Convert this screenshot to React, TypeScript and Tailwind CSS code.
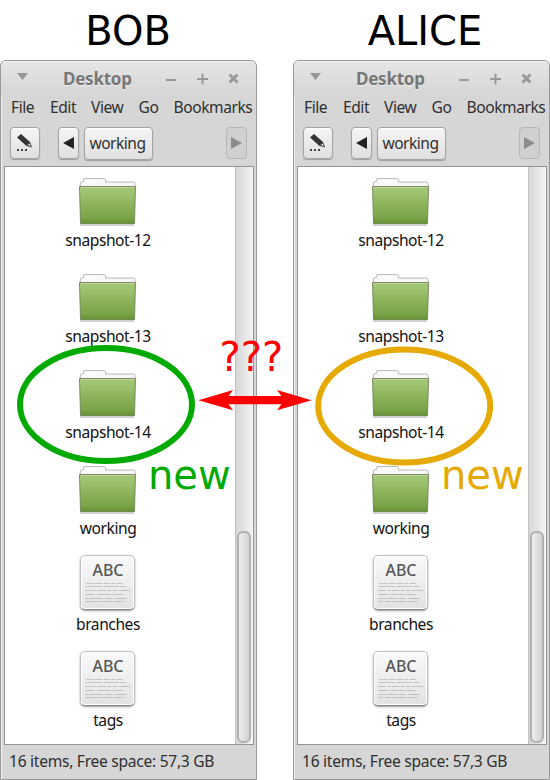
const uiFont = "font-['Noto_Sans','Open_Sans',sans-serif]";
const noteFont = "font-['DejaVu_Sans',sans-serif]";

function Folder() {
  return (
    <svg width="60" height="50" viewBox="0 0 60 50" className="block">
      <defs>
        <linearGradient id="folder" x1="0" y1="0" x2="0" y2="1">
          <stop offset="0" stopColor="#a8ca79" />
          <stop offset=".84" stopColor="#7ba347" />
          <stop offset="1" stopColor="#66902f" />
        </linearGradient>
      </defs>
      <path d="M3 48h54" stroke="#000" strokeOpacity=".18" strokeWidth="2" />
      <path d="M3.5 14V5.5l1-.5h1.500L7 1.500h20l1.500 1V5H57l1 1v9H3.500z" fill="#f8f8f8" stroke="#bcbcbc" />
      <path d="M7 4h18" stroke="#fff" />
      <path d="M2.500 9.500h56L57.500 46.500h-54z" fill="url(#folder)" stroke="#6b8052" strokeOpacity=".85" />
      <path d="M3.500 10.500h54" stroke="#bed69d" />
    </svg>
  );
}

function TextFile() {
  const lines = [
    "lorem ipsum dolo sit amet",
    "consectetur adipiscing elit.",
    "Donec at metus at est incidunt",
    "tempus. Phasellus blandit",
    "sollicitudin justo. Vivamus,",
    "sem eget consequat sodales",
  ];
  return (
    <div className="mx-auto h-[55px] w-[55px] rounded-[5px] border border-[#c0c0c0] border-b-[#858585] bg-linear-to-b from-[#fafafa] to-[#e2e2e2] tracking-normal shadow-[0_1px_2px_#0006,inset_0_0_0_1px_#fff]">
      <svg width="53" height="53" viewBox="0 0 53 53">
        <text x="11.5" y="19.5" fontFamily="Noto Sans" fontSize="16.5" fontWeight="500" fill="#555" textLength="31" lengthAdjust="spacingAndGlyphs">ABC</text>
        {lines.map((line, i) => (
          <text key={line} x="4.500" y={27.5 + i * 3.75} fontFamily="Liberation Mono" fontSize="2.5" fontWeight="bold" fill="#999">{line}</text>
        ))}
      </svg>
    </div>
  );
}

function Item({ name, file = false }: { name: string; file?: boolean }) {
  return (
    <div className="h-24 shrink-0 text-center">
      <div className="flex h-[50px] w-[204px] justify-center">
        {file ? <div className="-mt-[6px] w-[55px]"><TextFile /></div> : <Folder />}
      </div>
      <div className="mt-[3px] w-[206px] text-[15.6px] leading-5 tracking-[-0.45px] text-[#111]">{name}</div>
    </div>
  );
}

const button = "flex shrink-0 items-center justify-center rounded-[4px] border border-[#a4a4a4] bg-linear-to-b from-[#f6f6f6] to-[#dfdfdf] shadow-[0_1px_1px_#0004,inset_0_1px_0_#fff]";

function FileWindow() {
  return (
    <section className={`${uiFont} flex h-[720px] w-[257px] flex-col overflow-hidden rounded-t-[6px] border border-[#999] bg-[#d6d6d6] text-[15.6px] tracking-[-0.45px] text-[#303030] shadow-[inset_1px_1px_0_#eee]`}>
      <header className="flex h-[34px] shrink-0 items-center rounded-t-[5px] border-t border-[#f5f5f5] bg-linear-to-b from-[#e5e5e5] to-[#d6d6d6] pl-4">
        <svg width="12" height="9" className="mt-[-4px]"><path d="M0 1h11L5.500 8z" fill="#969696" /></svg>
        <h2 className="ml-[34px] w-[102px] text-[17px] leading-8 font-bold tracking-[-0.25px] text-[#777] [text-shadow:0_1px_0_#eee]">Desktop</h2>
        <svg width="76" height="14" viewBox="0 0 76 14" fill="none" stroke="#999" strokeWidth="2">
          <path d="M1 8h10M32 7h11M37.500 1.500v11" />
          <path d="M64.500 2.500l8 8M72.500 2.500l-8 8" strokeWidth="3" />
        </svg>
      </header>
      <nav className="grid h-6 shrink-0 grid-cols-[39px_41px_47.5px_35px_80px] items-center pl-[10px] leading-5 whitespace-nowrap">
        <span>File</span><span>Edit</span><span>View</span><span>Go</span><span>Bookmarks</span>
      </nav>
      <div className="flex h-[47px] shrink-0 items-center pt-[1px] pl-[9px]">
        <div className={`${button} h-8 w-[30px]`}>
          <svg width="18" height="20" viewBox="0 0 18 20">
            <path d="M1 4.500L5 1l9 8 1.500 5-5-1z" fill="#343434" />
            <path d="M11 12l3-2 1.500 4z" fill="#eee" stroke="#555" />
            <path d="M1 17h2m2 0h2m2 0h2" stroke="#444" strokeWidth="2" />
          </svg>
        </div>
        <div className={`${button} ml-[18px] h-8 w-[21px]`}>
          <svg width="12" height="14"><path d="M11 1v12L0 7z" fill="#222" /></svg>
        </div>
        <div className={`${button} ml-[5px] h-[33px] w-[69px] pt-px pr-[2px] tracking-[-0.5px]`}>working</div>
        <div className="ml-[73px] flex h-8 w-[21px] items-center justify-center rounded-[4px] border border-[#b7b7b7] bg-[#d0d0d0]">
          <svg width="12" height="14"><path d="M0 1v12L11 7z" fill="#8c8c8c" /></svg>
        </div>
      </div>
      <main className="ml-[3px] flex h-[579px] w-[250px] shrink-0 border border-[#949494] bg-white">
        <div className="flex h-[577px] w-[230px] flex-col pt-[10px]">
          <Item name="snapshot-12" /><Item name="snapshot-13" /><Item name="snapshot-14" />
          <Item name="working" /><Item name="branches" file /><Item name="tags" file />
        </div>
        <div className="flex w-[18px] items-end border-l border-[#c2c2c2] bg-linear-to-r from-[#d6d6d6] to-[#f5f5f5] pl-px">
          <div className="mb-px h-[212px] w-[14px] rounded-[6px] border-2 border-[#b0b0b0] bg-linear-to-r from-[#eee] to-[#d2d2d2]" />
        </div>
      </main>
      <footer className="flex flex-1 items-center pb-[1px] pl-2 tracking-[-0.28px] whitespace-nowrap">16 items, Free space: 57,3 GB</footer>
    </section>
  );
}

export default function App() {
  return (
    <div className="relative h-[780px] w-[550px] overflow-hidden bg-white">
      <div className={`${noteFont} grid h-[60px] grid-cols-[257px_257px] gap-9 pt-px text-center text-[40px] leading-[60px] text-black`}>
        <h1 className="pr-px">BOB</h1><h1 className="pl-[7px]">ALICE</h1>
      </div>
      <div className="flex gap-9"><FileWindow /><FileWindow /></div>
      <svg className="absolute inset-0" width="550" height="780" viewBox="0 0 550 780" fontFamily="DejaVu Sans" fontSize="40">
        <ellipse cx="106" cy="404.500" rx="86" ry="56.500" fill="none" stroke="#00aa00" strokeWidth="6" />
        <ellipse cx="404.200" cy="406" rx="86" ry="56.500" fill="none" stroke="#e6a900" strokeWidth="6" />
        <text x="148" y="489" fill="#00aa00">new</text>
        <text x="441" y="489" fill="#e6a900">new</text>
        <text x="219.500" y="371" fill="#f00">???</text>
        <path d="M198.500 400.300L233 390l-4.500 6h53l-4.500-6 34.500 10.300-34.500 10 4.500-6h-53l4.500 6z" fill="#f00" />
      </svg>
    </div>
  );
}
